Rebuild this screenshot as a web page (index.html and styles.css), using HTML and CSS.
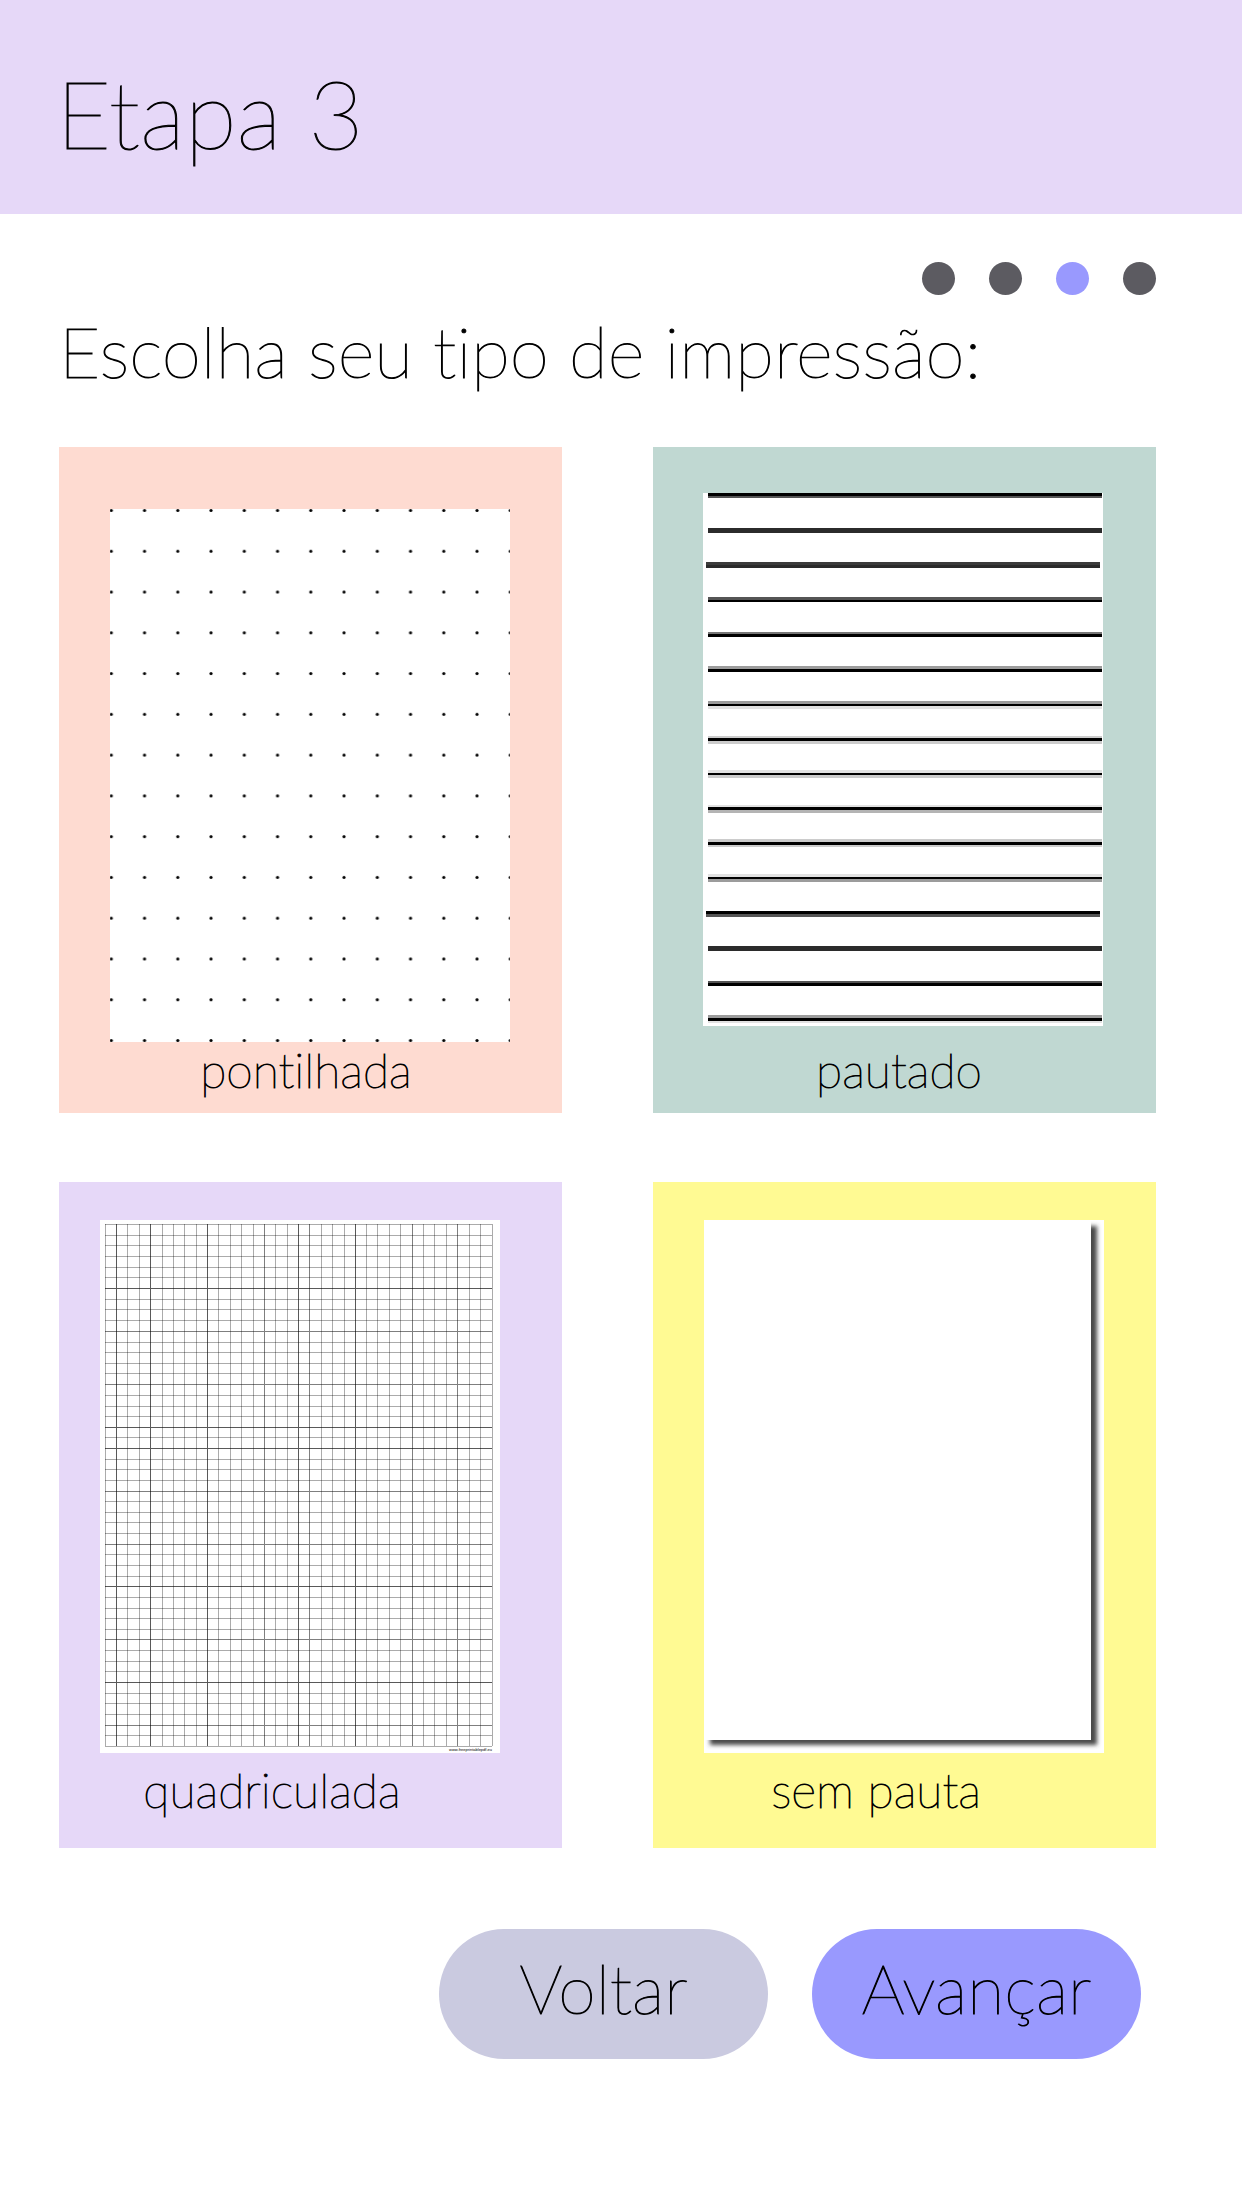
FILE: index.html
```html
<!DOCTYPE html>
<html lang="pt-BR">
<head>
  <meta charset="utf-8">
  <meta name="viewport" content="width=device-width, initial-scale=1">
  <title>Etapa 3</title>
  <link rel="stylesheet" href="styles.css">
</head>
<body>
  <header class="header">
    <h1 class="title">Etapa 3</h1>
  </header>
  <main class="content">
    <ol class="steps" aria-label="Etapas">
      <li class="step"></li>
      <li class="step"></li>
      <li class="step step-current" aria-current="step"></li>
      <li class="step"></li>
    </ol>
    <h2 class="question">Escolha seu tipo de impressão:</h2>
    <div class="options">
      <button type="button" class="card card-dotted">
        <svg class="paper" viewBox="0 0 400 533" aria-hidden="true">
          <defs>
            <pattern id="dots" x="-15.3" y="-18.9" width="33.25" height="40.77" patternUnits="userSpaceOnUse">
              <circle cx="16.6" cy="20.4" r="1.6"/>
            </pattern>
          </defs>
          <rect width="400" height="533" fill="#fff"/>
          <rect width="400" height="533" fill="url(#dots)"/>
        </svg>
        <span class="label">pontilhada</span>
      </button>
      <button type="button" class="card card-ruled">
        <svg class="paper" viewBox="0 0 400 533" shape-rendering="crispEdges" aria-hidden="true">
          <rect width="400" height="533" fill="#fff"/>
          <path fill="#000" d="M5 0h394v3H5zM5 107h394v2H5zM5 141h394v3H5zM5 176h394v3H5zM5 211h394v2H5zM5 245h394v3H5zM5 280h394v2H5zM5 314h394v3H5zM5 349h394v3H5zM5 384h394v2H5zM3 418h394v3H3zM5 490h394v3H5zM5 525h394v3H5z"/>
          <path fill="#2b2b2b" d="M5 35h394v5H5zM3 72h394v3H3zM5 453h394v5H5z"/>
          <path fill="#3c3c3c" d="M3 69h394v3H3z"/>
          <path fill="#555" d="M5 3h394v2H5zM5 104h394v3H5zM3 421h394v3H3zM5 488h394v2H5z"/>
          <path fill="#777" d="M5 139h394v2H5z"/>
          <path fill="#9c9c9c" d="M5 173h394v3H5zM5 208h394v3H5zM5 386h394v3H5zM5 522h394v3H5z"/>
          <path fill="#b4b4b4" d="M5 317h394v3H5z"/>
          <path fill="#ccc" d="M5 243h394v2H5zM5 248h394v3H5zM5 282h394v3H5zM5 346h394v3H5zM5 352h394v2H5z"/>
          <path fill="#e2e2e2" d="M5 213h394v3H5zM5 277h394v3H5zM5 312h394v2H5zM5 381h394v3H5zM5 528h394v2H5z"/>
        </svg>
        <span class="label">pautado</span>
      </button>
      <button type="button" class="card card-grid">
        <svg class="paper" viewBox="0 0 400 533" aria-hidden="true">
          <rect width="400" height="533" fill="#fff"/>
          <g shape-rendering="crispEdges" fill="none">
            <path stroke="#000" stroke-opacity=".33" d="M5.5 4v522M27.5 4v522M39.5 4v522M62.5 4v522M73.5 4v522M84.5 4v522M96.5 4v522M118.5 4v522M130.5 4v522M141.5 4v522M153.5 4v522M175.5 4v522M187.5 4v522M221.5 4v522M232.5 4v522M244.5 4v522M266.5 4v522M277.5 4v522M289.5 4v522M300.5 4v522M323.5 4v522M334.5 4v522M346.5 4v522M369.5 4v522M380.5 4v522M392.5 4v522"/>
            <path stroke="#000" stroke-opacity=".33" d="M5 4.5h387M5 15.5h387M5 25.5h387M5 36.5h387M5 47.5h387M5 57.5h387M5 79.5h387M5 89.5h387M5 100.5h387M5 122.5h387M5 132.5h387M5 143.5h387M5 153.5h387M5 175.5h387M5 186.5h387M5 196.5h387M5 217.5h387M5 239.5h387M5 249.5h387M5 260.5h387M5 281.5h387M5 292.5h387M5 302.5h387M5 313.5h387M5 334.5h387M5 345.5h387M5 356.5h387M5 377.5h387M5 388.5h387M5 398.5h387M5 409.5h387M5 430.5h387M5 441.5h387M5 451.5h387M5 473.5h387M5 483.5h387M5 494.5h387M5 515.5h387M5 526.5h387"/>
            <path stroke="#000" stroke-opacity=".5" d="M164.5 4v522M209.5 4v522M312.5 4v522M357.5 4v522M5 111.5h387M5 164.5h387M5 271.5h387M5 324.5h387M5 419.5h387M5 505.5h387"/>
            <path stroke="#000" stroke-opacity=".65" d="M16.5 4v522M50.5 4v522M107.5 4v522M198.5 4v522M255.5 4v522M5 68.5h387M5 207.5h387M5 228.5h387M5 366.5h387M5 462.5h387"/>
          </g>
          <text class="credit" x="392" y="531" text-anchor="end">www.freeprintablepdf.eu</text>
        </svg>
        <span class="label">quadriculada</span>
      </button>
      <button type="button" class="card card-blank">
        <svg class="paper" viewBox="0 0 400 533" aria-hidden="true">
          <defs>
            <filter id="soft" x="-5%" y="-5%" width="110%" height="110%">
              <feGaussianBlur stdDeviation="2"/>
            </filter>
          </defs>
          <rect width="400" height="533" fill="#fff"/>
          <rect x="6" y="6" width="387" height="519" fill="#484848" filter="url(#soft)"/>
          <rect width="387" height="520" fill="#fff"/>
        </svg>
        <span class="label">sem pauta</span>
      </button>
    </div>
    <div class="actions">
      <button type="button" class="button button-back">Voltar</button>
      <button type="button" class="button button-next">Avançar</button>
    </div>
  </main>
</body>
</html>
```
FILE: styles.css
```css
* {
  box-sizing: border-box;
}

body {
  margin: 0;
  background: #fff;
  color: #000;
  font-family: Lato, "Open Sans", sans-serif;
  font-weight: 100;
  font-variant-ligatures: none;
}

button {
  border: 0;
  margin: 0;
  color: inherit;
  font: inherit;
  font-variant-ligatures: none;
  cursor: pointer;
}

.header {
  padding: 56px 64px 46px 56px;
  background: #e6d8f8;
}

.title,
.question {
  margin: 0;
  font-weight: inherit;
}

.title,
.question,
.label,
.button {
  -webkit-text-stroke: 1px #000;
}

.title {
  font-size: 95px;
  line-height: 112px;
}

.content {
  padding: 48px 86px 64px 59px;
}

.steps {
  display: flex;
  justify-content: flex-end;
  gap: 34px;
  margin: 0;
  padding: 0;
  list-style: none;
}

.step {
  width: 33px;
  height: 33px;
  border-radius: 50%;
  background: #5c5b61;
}

.step-current {
  background: #9999fe;
}

.question {
  padding-top: 12px;
  font-size: 71px;
  line-height: 88px;
}

.options {
  display: grid;
  grid-template-columns: 1fr 1fr;
  gap: 69px 91px;
  padding-top: 52px;
}

.card {
  display: flex;
  flex-direction: column;
  min-height: 666px;
  padding: 38px 52px 16px 51px;
  font-size: 48px;
  line-height: 48px;
}

.paper {
  display: block;
  width: 100%;
  height: auto;
}

.label {
  width: 100%;
  padding-right: 8px;
  text-align: center;
}

.card-dotted {
  gap: 4px;
  padding-top: 62px;
  background: #fedbd1;
}

.card-ruled {
  gap: 20px;
  padding: 46px 53px 16px 50px;
  background: #c0d8d2;
}

.card-grid {
  gap: 13px;
  padding-left: 41px;
  padding-right: 62px;
  background: #e6d8f8;
}

.card-blank {
  gap: 13px;
  background: #fffa93;
}

.card-grid .label,
.card-blank .label {
  padding-right: 56px;
}

.credit {
  font-family: "Liberation Sans", sans-serif;
  font-size: 4px;
  font-weight: 400;
}

.actions {
  display: flex;
  justify-content: flex-end;
  gap: 44px;
  padding: 81px 15px 0 0;
}

.button {
  width: 329px;
  height: 130px;
  padding: 0 0 12px;
  border-radius: 65px;
  font-size: 68px;
  line-height: 80px;
}

.button-back {
  background: #cacae0;
}

.button-next {
  background: #9999fe;
}
```
